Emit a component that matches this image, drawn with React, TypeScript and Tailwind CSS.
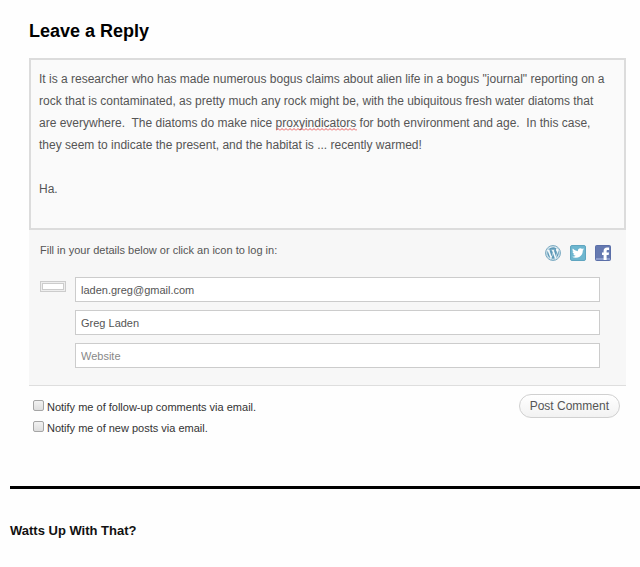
import React, { useState } from 'react';
import { FaWordpress, FaTwitter } from 'react-icons/fa';

const COMMENT = `It is a researcher who has made numerous bogus claims about alien life in a bogus "journal" reporting on a rock that is contaminated, as pretty much any rock might be, with the ubiquitous fresh water diatoms that are everywhere.  The diatoms do make nice proxyindicators for both environment and age.  In this case, they seem to indicate the present, and the habitat is ... recently warmed!

Ha.`;

const FIELDS = [
  { id: 'email', label: 'Email', type: 'email', value: 'laden.greg@gmail.com' },
  { id: 'author', label: 'Name', type: 'text', value: 'Greg Laden' },
  { id: 'url', label: 'Website', type: 'url', value: '' },
];

const CommentBox: React.FC = () => {
  const [comment, setComment] = useState(COMMENT);

  return (
    <div className="relative">
      <textarea
        id="comment"
        aria-label="Comment"
        spellCheck={false}
        value={comment}
        onChange={(e) => setComment(e.target.value)}
        className="block w-full h-[172px] resize-none overflow-hidden border-2 border-[#dcdcdc] bg-[#fafafa] py-2 pr-3 pl-2 text-[12px] leading-[22px] text-[#555] outline-none"
      />
      {/* Spelling mark, goes away once the text is edited */}
      {comment === COMMENT && (
        <svg aria-hidden="true" className="pointer-events-none absolute top-[70px] left-[247px]" width="81" height="3">
          <defs>
            <pattern id="squiggle" width="4" height="3" patternUnits="userSpaceOnUse">
              <path d="M0 2.5L2 0.5L4 2.5" fill="none" stroke="#e85a5a" />
            </pattern>
          </defs>
          <rect width="81" height="3" fill="url(#squiggle)" />
        </svg>
      )}
    </div>
  );
};

const LoginIcons: React.FC = () => (
  <div className="flex items-center gap-[9px]">
    <a href="#wordpress" aria-label="Log in with WordPress" className="flex size-4 items-center justify-center rounded-full border border-[#7fadc4] bg-[#f4f9fb] text-[#5f9ab8]">
      <FaWordpress size={14} />
    </a>
    <a href="#twitter" aria-label="Log in with Twitter" className="flex size-4 items-center justify-center rounded-xs border border-[#5fa5c0] bg-[#6db6cf] text-white">
      <FaTwitter size={12} />
    </a>
    <a href="#facebook" aria-label="Log in with Facebook" className="block">
      <svg width="16" height="16" viewBox="0 0 16 16">
        <rect x="0.5" y="0.5" width="15" height="15" rx="1" fill="#6579b0" stroke="#5b6fa8" />
        <rect x="1" y="13" width="14" height="2" fill="#8c9dcc" />
        <path d="M8.6 15V9.9H7V7.4h1.6V6c0-2.3 1.3-3.5 3.4-3.5h2.1v2.6h-1.3c-.9 0-1.2.4-1.2 1v1.3h2.4l-.3 2.5h-2.1V15z" fill="#fff" />
      </svg>
    </a>
  </div>
);

const DetailsPanel: React.FC = () => (
  <div className="border-b border-[#dedede] bg-[#f7f7f7] pt-[11px] pr-[26px] pb-[17px] pl-[11px]">
    <div className="flex items-start justify-between -mr-[11px]">
      <p className="text-[11px] leading-[18px] text-[#555]">Fill in your details below or click an icon to log in:</p>
      <div className="pt-1">
        <LoginIcons />
      </div>
    </div>
    <div className="mt-4 flex items-start gap-[9px]">
      <div className="mt-1 h-[11px] w-[26px] shrink-0 border border-[#ccc] bg-[#eee] p-px">
        <div className="h-full border border-[#ccc] bg-white" />
      </div>
      <div className="flex grow flex-col gap-2">
        {FIELDS.map((field) => (
          <input
            key={field.id}
            id={field.id}
            type={field.type}
            aria-label={field.label}
            placeholder={field.label}
            defaultValue={field.value}
            className="block h-[25px] w-full border border-[#ccc] bg-white px-[5px] text-[11px] text-[#555] outline-none placeholder:text-[#888]"
          />
        ))}
      </div>
    </div>
  </div>
);

const NotifyOption: React.FC<{ id: string; label: string }> = ({ id, label }) => (
  <div className="flex items-center gap-[3px]">
    <input
      id={id}
      type="checkbox"
      className="mb-1 size-[11px] appearance-none rounded-xs border border-[#a5a5a5] bg-linear-to-b from-[#f2f2f2] to-[#dedede] checked:bg-[#888]"
    />
    <label htmlFor={id} className="text-[11px] leading-[21px] text-[#333]">{label}</label>
  </div>
);

export default function App() {
  return (
    <div className="min-h-screen bg-[#fefefe] font-['Liberation_Sans',Arial,sans-serif]">
      <form className="pt-[18px] pr-[14px] pl-[29px]" onSubmit={(e) => e.preventDefault()}>
        <h3 className="mb-[14px] text-[18px] leading-[26px] font-bold text-black">Leave a Reply</h3>
        <CommentBox />
        <DetailsPanel />
        <div className="flex items-start justify-between pt-2 pr-[6px] pl-1">
          <div className="pt-[3px]">
            <NotifyOption id="subscribe_comments" label="Notify me of follow-up comments via email." />
            <NotifyOption id="subscribe_blog" label="Notify me of new posts via email." />
          </div>
          <button
            type="submit"
            className="h-6 rounded-full border border-[#d0d0d0] bg-linear-to-b from-white to-[#f2f2f2] px-[10px] text-[12px] text-[#555]"
          >
            Post Comment
          </button>
        </div>
      </form>
      <footer className="mt-[47px] ml-[10px] border-t-[3px] border-black pt-[31px]">
        <a href="#home" className="block text-[13px] leading-[22px] font-bold text-[#111]">Watts Up With That?</a>
      </footer>
    </div>
  );
}
